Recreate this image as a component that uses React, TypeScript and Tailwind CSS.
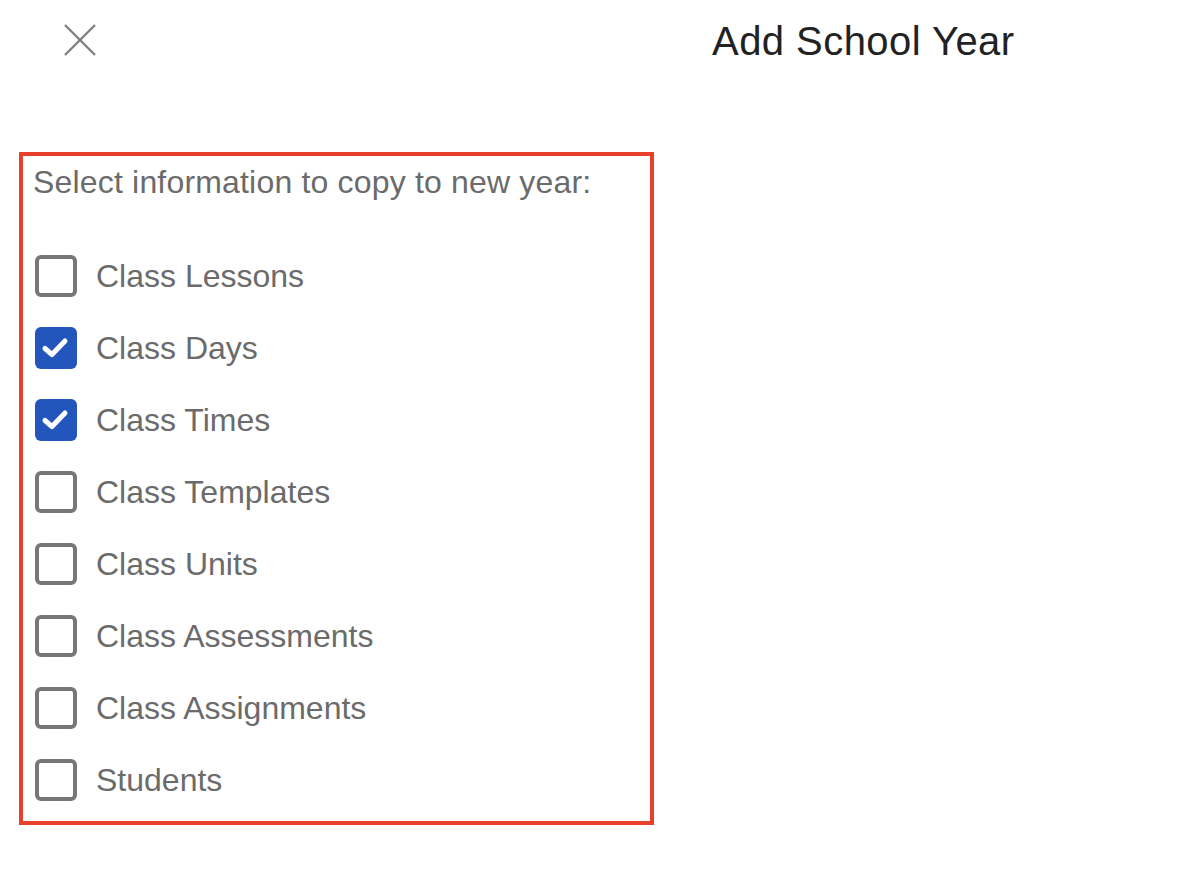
import React from 'react';

const options = [
  { label: 'Class Lessons', checked: false },
  { label: 'Class Days', checked: true },
  { label: 'Class Times', checked: true },
  { label: 'Class Templates', checked: false },
  { label: 'Class Units', checked: false },
  { label: 'Class Assessments', checked: false },
  { label: 'Class Assignments', checked: false },
  { label: 'Students', checked: false },
];

const Checkbox: React.FC<{ checked: boolean; onClick: () => void }> = ({ checked, onClick }) => {
  if (checked) {
    return (
      <button
        onClick={onClick}
        className="flex h-[42px] w-[42px] shrink-0 items-center justify-center rounded-[6px] bg-[#2356bc]"
      >
        <svg width="42" height="42" viewBox="0 0 42 42" fill="none">
          <path
            d="M10 21.5 L17 27.5 L30 14"
            stroke="white"
            strokeWidth="5"
            strokeLinecap="round"
            strokeLinejoin="round"
          />
        </svg>
      </button>
    );
  }
  return (
    <button
      onClick={onClick}
      className="h-[42px] w-[42px] shrink-0 rounded-[6px] border-[4px] border-[#777777] bg-white"
    />
  );
};

export default function App() {
  const [items, setItems] = React.useState(options);

  const toggle = (i: number) => {
    setItems(items.map((it, idx) => (idx === i ? { ...it, checked: !it.checked } : it)));
  };

  return (
    <div className="min-h-[876px] w-full bg-white font-['Liberation_Sans',Arial,sans-serif]">
      {/* Header */}
      <div className="flex items-start pt-[18px]">
        <button className="ml-[64px] mt-[6px] h-[32px] w-[32px]">
          <svg width="32" height="32" viewBox="0 0 32 32" fill="none">
            <path d="M1 1 L31 31 M31 1 L1 31" stroke="#7a7a7a" strokeWidth="2.2" />
          </svg>
        </button>
        <h1 className="ml-[616px] text-[40px] leading-[46px] font-normal tracking-[0.45px] text-[#222222]">
          Add School Year
        </h1>
      </div>

      {/* Copy options */}
      <div className="ml-[19px] mt-[88px] h-[673px] w-[635px] border-[4px] border-[#e8402a] pl-[10px] pt-[8px]">
        <p className="text-[32px] leading-[37px] tracking-[0.18px] text-[#6b6b6b]">
          Select information to copy to new year:
        </p>
        <div className="mt-[39px] flex flex-col">
          {items.map((item, i) => (
            <div key={item.label} className="flex h-[72px] items-center pl-[2px]">
              <Checkbox checked={item.checked} onClick={() => toggle(i)} />
              <span className="ml-[19px] text-[32px] leading-[37px] text-[#6b6b6b]">{item.label}</span>
            </div>
          ))}
        </div>
      </div>
    </div>
  );
}
